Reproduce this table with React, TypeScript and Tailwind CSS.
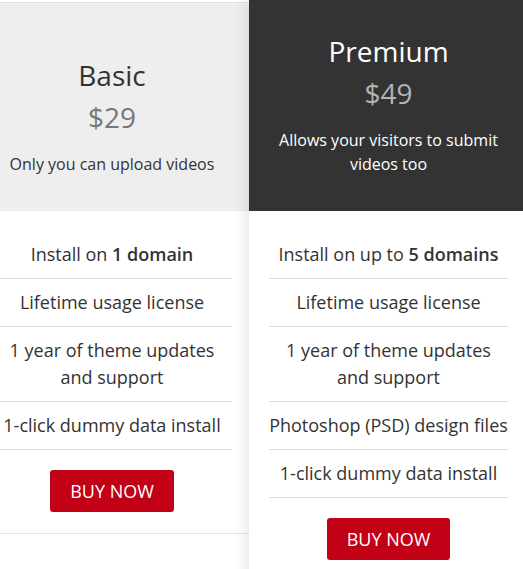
import React from 'react';

type Feature = { text: React.ReactNode };

const basicFeatures: Feature[] = [
  { text: <>Install on <span className="font-semibold">1 domain</span></> },
  { text: 'Lifetime usage license' },
  { text: <>1 year of theme updates<br />and support</> },
  { text: '1-click dummy data install' },
];

const premiumFeatures: Feature[] = [
  { text: <>Install on up to <span className="font-semibold">5 domains</span></> },
  { text: 'Lifetime usage license' },
  { text: <>1 year of theme updates<br />and support</> },
  { text: 'Photoshop (PSD) design files' },
  { text: '1-click dummy data install' },
];

function FeatureList({ items }: { items: Feature[] }) {
  return (
    <ul className="flex flex-col pt-[20px]">
      {items.map((f, i) => (
        <li
          key={i}
          className="border-b border-[#dddddd] py-[10px] text-center text-[18px] leading-[27px] text-[#333333]"
        >
          {f.text}
        </li>
      ))}
    </ul>
  );
}

function BuyButton() {
  return (
    <div className="flex justify-center pt-[20px] pb-[21px]">
      <button className="h-[42px] rounded-[3px] bg-[#c20016] px-5 text-[18px] leading-[42px] text-white">
        BUY NOW
      </button>
    </div>
  );
}

export default function App() {
  return (
    <div
      className="flex h-[569px] w-[523px] items-start overflow-hidden bg-white"
      style={{ fontFamily: '"Open Sans", "Noto Sans", sans-serif' }}
    >
      {/* Basic */}
      <div className="ml-[-28px] mt-[2px] w-[280px] shrink-0 border-t border-b border-[#e3e3e3] bg-white">
        <div className="flex h-[208px] flex-col items-center justify-end bg-[#eeeeee] px-5 pb-[35px]">
          <h2 className="text-[28px] leading-[42px] text-[#333333]">Basic</h2>
          <div className="text-[28px] leading-[42px] text-[#777777]">$29</div>
          <p className="mt-[14px] text-center text-[16px] leading-[24px] text-[#333333]">
            Only you can upload videos
          </p>
        </div>
        <div className="px-5">
          <FeatureList items={basicFeatures} />
          <BuyButton />
        </div>
      </div>

      {/* Premium */}
      <div className="relative z-10 ml-[-3px] w-[279px] shrink-0 bg-white shadow-[0_0_16px_rgba(0,0,0,0.14)]">
        <div className="flex h-[211px] flex-col items-center justify-end bg-[#333333] px-5 pb-[35px]">
          <h2 className="text-[28px] leading-[42px] text-white">Premium</h2>
          <div className="text-[28px] leading-[42px] text-[#b4b4b4]">$49</div>
          <p className="mt-[14px] text-center text-[16px] leading-[24px] text-white">
            Allows your visitors to submit
            <br />
            videos too
          </p>
        </div>
        <div className="px-5">
          <FeatureList items={premiumFeatures} />
          <BuyButton />
        </div>
      </div>
    </div>
  );
}
